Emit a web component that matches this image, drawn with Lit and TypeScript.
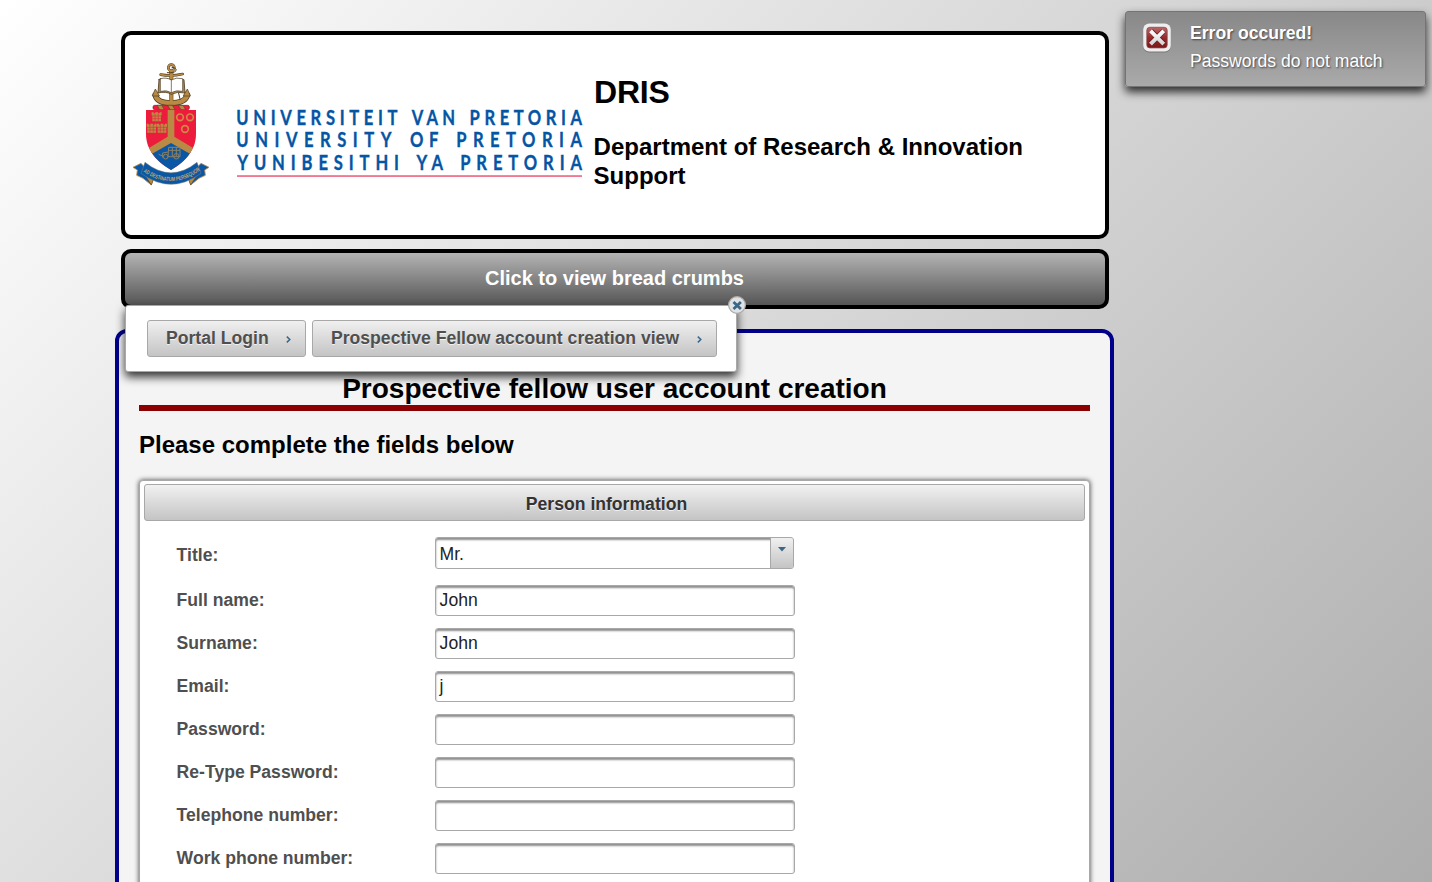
import { LitElement, html, css, svg } from "lit";
import { customElement, property } from "lit/decorators.js";

const INK = "#4a3b24";
const GOLD = "#b98a43";
const RED = "#ee1c3c";
const BLUE = "#0a58a5";

const castle = (x: number, y: number) => svg`
  <g fill=${GOLD}>
    <path d="M${x} ${y}h6v3h5v-3h8v3h5v-3h6v9h-2v18h-26v-18h-2z"></path>
    <path d="M${x + 2} ${y + 11}h26M${x + 2} ${y + 19}h26M${x + 10} ${y + 4}v22M${x + 20} ${y + 4}v22" stroke=${RED} stroke-width="1.6" fill="none"></path>
  </g>`;

@customElement("uni-logo")
class UniLogo extends LitElement {
  static styles = css`
    :host { display: block; width: 464px; height: 130px; flex: none; }
    svg { display: block; }
    .name { font: 700 20px Lato, "Liberation Sans", sans-serif; fill: #0455a4; stroke: #0455a4; stroke-width: .35px; }
    .motto { font: 700 17px "Liberation Sans", sans-serif; fill: #cba468; }
  `;

  private words: [string, number, number, number][] = [
    ["UNIVERSITEIT", 106.3, 267.5, 65],
    ["VAN", 281.7, 325, 65],
    ["PRETORIA", 339.6, 452, 65],
    ["UNIVERSITY", 106.3, 261.5, 87.3],
    ["OF", 280, 308.5, 87.3],
    ["PRETORIA", 326.2, 452, 87.3],
    ["YUNIBESITHI", 107.3, 269, 109.6],
    ["YA", 286.5, 313, 109.6],
    ["PRETORIA", 330.2, 452, 109.6],
  ];

  render() {
    const k = 0.83;
    return html`<svg width="464" height="130" viewBox="0 0 464 130">
      <svg width="84" height="130" viewBox="0 0 252 390">
        <g fill="none" stroke-linecap="round" stroke-linejoin="round">
          <path d="M76 105Q80 129 123 129Q166 129 172 105" stroke=${INK} stroke-width="17"></path>
          <path d="M124 32V126" stroke=${INK} stroke-width="12"></path>
          <circle cx="124" cy="23" r="9" stroke=${INK} stroke-width="8"></circle>
          <path d="M92 44Q124 50 158 42" stroke=${INK} stroke-width="8"></path>
          <path d="M76 105Q80 129 123 129Q166 129 172 105" stroke=${GOLD} stroke-width="13"></path>
          <path d="M124 32V126" stroke=${GOLD} stroke-width="9"></path>
          <circle cx="124" cy="23" r="9" stroke=${GOLD} stroke-width="5"></circle>
          <path d="M92 44Q124 50 158 42" stroke=${GOLD} stroke-width="5"></path>
          <path d="M126 22Q141 24 138 32Q132 40 112 38M146 100L150 117" stroke=${INK} stroke-width="3"></path>
          <path d="M67 107L76 87L88 107ZM160 107L172 87L181 107Z" fill=${GOLD} stroke=${INK} stroke-width="2"></path>
          <path d="M87 59L84 99Q108 93 124 103Q142 93 165 99L162 59Q140 53 124 60Q108 53 87 59Z" fill=${GOLD} stroke=${INK} stroke-width="2.5"></path>
          <path d="M91 56V94Q110 89 124 98Q138 89 158 94V56Q138 51 124 60Q110 51 91 56Z" fill="#fff" stroke=${INK} stroke-width="2"></path>
          <path d="M124 60V97" stroke=${INK} stroke-width="2"></path>
        </g>
        <rect x="69" y="136" width="109" height="13" rx="5" fill=${RED} stroke="#5d2a20" stroke-width="2"></rect>
        <path d="M81 136h14l8 13h-14zM113 136h14l8 13h-14zM145 136h14l8 13h-14z" fill=${GOLD} stroke=${INK} stroke-width="1.6"></path>
        <clipPath id="shield"><path d="M48 150H198V222C198 274 160 308 123 330C86 308 48 274 48 222Z"></path></clipPath>
        <g clip-path="url(#shield)">
          <path d="M48 150H198V335H48Z" fill=${RED}></path>
          <path d="M40 292L123 242L206 292V340H40Z" fill=${BLUE}></path>
          <path d="M113 150H133V230L206 274V296L123 249L40 296V274L113 230Z" fill=${GOLD}></path>
        </g>
        ${castle(65, 157)}${castle(50, 191)}${castle(81, 191)}
        <g fill="none" stroke="#cf8a45" stroke-width="5">
          <circle cx="150" cy="172" r="10"></circle><circle cx="180" cy="172" r="10"></circle><circle cx="165" cy="207" r="10"></circle>
        </g>
        <g fill="none" stroke="#8f8062" stroke-width="3">
          <path d="M116 262H150V290H114ZM116 271H150M127 262V288M139 262V288M114 276L98 279V293M86 283L100 289"></path>
          <circle cx="107" cy="290" r="7"></circle><circle cx="139" cy="289" r="8"></circle>
        </g>
        <path d="M33 310L9 322L22 330L20 346L39 355L64 375L72 352ZM213 310L237 322L224 330L226 346L207 355L182 375L174 352Z" fill=${BLUE} stroke=${GOLD} stroke-width="2.5"></path>
        <path d="M40 338L64 375L72 353ZM206 338L182 375L174 353Z" fill=${GOLD} stroke=${INK} stroke-width="1.5"></path>
        <path d="M45 307Q123 370 201 307L213 340Q123 406 33 340Z" fill=${BLUE} stroke="#7d8078" stroke-width="1.5"></path>
        <path id="motto" d="M40 335Q123 393 209 332" fill="none"></path>
        <text class="motto"><textPath href="#motto" textLength="184" lengthAdjust="spacingAndGlyphs">AD DESTINATUM PERSEQUOR</textPath></text>
      </svg>
      <g transform="scale(${k} 1)">
        ${this.words.map(
          ([t, a, b, y]) => svg`<text class="name" x=${a / k} y=${y} textLength=${(b - a) / k}>${t}</text>`,
        )}
      </g>
      <rect x="107" y="115.2" width="345" height="1.7" fill="#ee6b85"></rect>
    </svg>`;
  }
}

@customElement("crumb-button")
class CrumbButton extends LitElement {
  @property() label = "";
  static styles = css`
    :host {
      display: flex; align-items: center; justify-content: space-between; box-sizing: border-box;
      height: 37px; padding: 0 14px 0 18px; border: 1px solid #a8a8a8; border-radius: 3px;
      background: linear-gradient(#f0f0f0, #c4c4c4);
      font-weight: 700; color: #4f4f4f; text-shadow: 0 1px 0 rgba(255, 255, 255, .7); white-space: nowrap;
    }
    svg { margin-top: 2px; }
  `;
  render() {
    return html`<span>${this.label}</span>
      <svg width="5" height="7" viewBox="0 0 5 7"><path d="M.8 .6L3.8 3.5L.8 6.4" fill="none" stroke="#38678a" stroke-width="1.5"></path></svg>`;
  }
}

@customElement("form-row")
class FormRow extends LitElement {
  @property() label = "";
  @property() value = "";
  @property({ type: Boolean, reflect: true }) select = false;
  static styles = css`
    :host { display: grid; grid-template-columns: 258.4px 360px; align-items: center; height: 43px; }
    :host([select]) { height: 48px; }
    .label { font-weight: 700; color: #4f4f4f; line-height: 20px; padding-bottom: 1px; }
    :host([select]) .label { padding: 0; }
    .field {
      display: flex; box-sizing: border-box; height: 31px; border: 1px solid #a8a8a8; border-radius: 3px;
      background: #fff; box-shadow: inset 0 2px 2px #8f8f8f; color: #222; padding: 0 3.6px; line-height: 28px;
    }
    :host([select]) .field { width: 359px; height: 32px; padding-right: 0; margin-bottom: 4px; justify-content: space-between; line-height: 32px; }
    .arrow {
      display: flex; justify-content: center; width: 22px; border-left: 1px solid #a8a8a8;
      border-radius: 0 2px 2px 0; background: linear-gradient(#f0f0f0, #c4c4c4);
    }
    .arrow svg { margin-top: 9px; }
  `;
  render() {
    return html`<span class="label">${this.label}</span>
      <div class="field"><span>${this.value}</span>${this.select
        ? html`<span class="arrow"><svg width="8" height="5" viewBox="0 0 8 5"><path d="M0 0H8L4 4.5Z" fill="#38678a"></path></svg></span>`
        : ""}</div>`;
  }
}

@customElement("app-root")
class AppRoot extends LitElement {
  static styles = css`
    :host {
      display: block; position: relative; box-sizing: border-box; width: 1432px; height: 882px; overflow: hidden;
      padding: 31px 0 0 115px; background: linear-gradient(135deg, #fff, #adadad);
      font: 17.6px "Liberation Sans", Arial, sans-serif; color: #000;
    }
    h1, h2, h3 { margin: 0; font-weight: 700; }
    .header, .bar { box-sizing: border-box; width: 988px; margin-left: 6px; border: 4px solid #000; border-radius: 10px; }
    .header { display: flex; height: 208px; padding: 25px 0 0 5px; background: #fff; }
    .heading { width: 470px; }
    .heading h1 { font-size: 32px; line-height: 36px; margin-top: 14px; letter-spacing: -.2px; }
    .heading h2 { font-size: 24px; line-height: 29px; margin-top: 22px; margin-left: -.4px; }
    .bar {
      height: 60px; margin-top: 10px; background: linear-gradient(#b4b4b4, #555); color: #fff;
      font-size: 20px; font-weight: 700; line-height: 50px; text-align: center; padding-right: 1px;
    }
    .main {
      box-sizing: border-box; width: 999px; height: 700px; margin-top: 20px; padding: 38px 20px 0;
      border: 4px solid #00008b; border-radius: 12px; background: #f4f4f4;
    }
    .title { font-size: 28px; line-height: 32px; padding-top: 2px; text-align: center; border-bottom: 6px solid #8b0000; }
    .sub { font-size: 24px; line-height: 28px; margin: 20px 0 21px; }
    .panel {
      box-sizing: border-box; height: 600px; border: 1px solid #a8a8a8; border-radius: 4px; background: #fff;
      padding: 3px 4px; box-shadow: 0 0 5px #444;
    }
    .panel-head {
      box-sizing: border-box; height: 37px; border: 1px solid #a8a8a8; border-radius: 3px; padding-right: 16px;
      background: linear-gradient(#f1f1f1, #c4c4c4); text-align: center; font-weight: 700; line-height: 38px;
      color: #333; text-shadow: 0 1px 0 rgba(255, 255, 255, .7);
    }
    .rows { padding: 10px 0 0 32.6px; }
    .crumbs {
      position: absolute; left: 125px; top: 305px; display: flex; gap: 6px; box-sizing: border-box; width: 612px;
      height: 67px; padding: 14px 0 0 21px; background: #fff; border: 1px solid #a8a8a8; border-radius: 3px;
      box-shadow: 0 5px 10px rgba(0, 0, 0, .8);
    }
    .c1 { width: 159px; }
    .c2 { width: 405px; }
    .close { position: absolute; right: -10px; top: -10px; }
    .toast {
      position: absolute; left: 1125px; top: 11px; box-sizing: border-box; width: 301px; height: 76px; display: flex;
      gap: 18px; padding: 10px 0 0 16px; border: 1px solid #747474; border-radius: 3px;
      background: linear-gradient(#888, #aaa); box-shadow: 0 5px 10px rgba(0, 0, 0, .8);
      color: #fff; text-shadow: 1px 1px 2px #444;
    }
    .toast p { margin: 0; line-height: 22px; }
    .toast p + p { margin-top: 6px; }
    .strong { font-weight: 700; }
  `;

  private fields: [string, string][] = [
    ["Full name:", "John"],
    ["Surname:", "John"],
    ["Email:", "j"],
    ["Password:", ""],
    ["Re-Type Password:", ""],
    ["Telephone number:", ""],
    ["Work phone number:", ""],
  ];

  render() {
    return html`
      <div class="header">
        <uni-logo></uni-logo>
        <div class="heading">
          <h1>DRIS</h1>
          <h2>Department of Research &amp; Innovation Support</h2>
        </div>
      </div>
      <div class="bar">Click to view bread crumbs</div>
      <div class="main">
        <h2 class="title">Prospective fellow user account creation</h2>
        <h3 class="sub">Please complete the fields below</h3>
        <div class="panel">
          <div class="panel-head">Person information</div>
          <div class="rows">
            <form-row select label="Title:" value="Mr."></form-row>
            ${this.fields.map(([l, v]) => html`<form-row label=${l} value=${v}></form-row>`)}
          </div>
        </div>
      </div>
      <div class="crumbs">
        <crumb-button class="c1" label="Portal Login"></crumb-button>
        <crumb-button class="c2" label="Prospective Fellow account creation view"></crumb-button>
        <svg class="close" width="18" height="18" viewBox="0 0 18 18">
          <circle cx="9" cy="9" r="8.4" fill="#e2e2e2" stroke="#a8a8a8" stroke-width="1.2"></circle>
          <path d="M5.5 5.9L12.9 12.9M12.9 5.9L5.5 12.9" stroke="#38678a" stroke-width="2.8"></path>
        </svg>
      </div>
      <div class="toast">
        <svg width="30" height="32" viewBox="0 0 30 32">
          <defs>
            <linearGradient id="rd" x2="0" y2="1"><stop offset="0" stop-color="#b8686a"></stop><stop offset=".5" stop-color="#962a2d"></stop><stop offset="1" stop-color="#7c1719"></stop></linearGradient>
            <linearGradient id="wh" x2="0" y2="1"><stop offset="0" stop-color="#fff"></stop><stop offset="1" stop-color="#d4d4d4"></stop></linearGradient>
          </defs>
          <rect x="1.2" y="2" width="27.6" height="28.5" rx="6" fill="#777"></rect>
          <rect x="1.2" y="1.5" width="27.6" height="28" rx="6" fill="#eee"></rect>
          <rect x="4.8" y="5.3" width="20.4" height="20.6" rx="3" fill="url(#rd)" stroke="#8a4a4b" stroke-width=".8"></rect>
          <path d="M9 9L21.5 21.5M21.5 9L9 21.5" stroke="#6d1517" stroke-width="5.2"></path>
          <path d="M8.5 8.9L21.7 22.1M21.7 8.9L8.5 22.1" stroke="url(#wh)" stroke-width="4"></path>
        </svg>
        <div>
          <p class="strong">Error occured!</p>
          <p>Passwords do not match</p>
        </div>
      </div>
    `;
  }
}
